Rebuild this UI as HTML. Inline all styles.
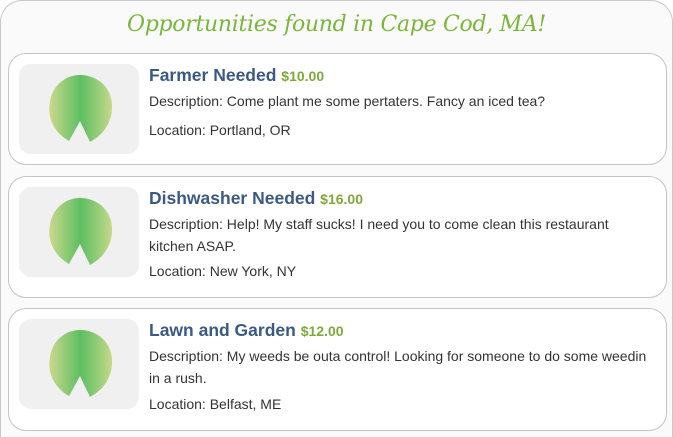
<!DOCTYPE html>
<html><head><meta charset="utf-8"><style>
*{margin:0;padding:0;box-sizing:border-box}
html,body{width:673px;height:437px;overflow:hidden}
body{background:#fff;font-family:"Liberation Sans",Arial,sans-serif;position:relative}
.outer{position:absolute;left:0;top:0;width:673px;height:437px;border:1px solid #c8c8c8;border-bottom:none;border-radius:22px 22px 0 0;background:#fafafa}
h1{position:absolute;left:0;width:673px;top:12px;text-align:center;font-family:"DejaVu Serif","Liberation Serif",serif;font-style:italic;font-weight:normal;font-size:22px;color:#7ab63a;letter-spacing:-0.3px}
.card{position:absolute;left:8px;width:659px;border:1px solid #c4c4c4;border-radius:18px;background:#fff}
.img{position:absolute;left:10px;top:10px;width:120px;height:90px;background:#f0f0f0;border-radius:12px}
.img svg{position:absolute;left:26px;top:10px}
.t{position:absolute;left:140px;top:11px;font-size:17.5px;font-weight:bold;color:#3a5a85}
.t span{font-size:14px;color:#7fa83a}
.d{position:absolute;left:140px;top:36px;width:500px;font-size:14px;line-height:22px;color:#333}
.l{position:absolute;left:140px;font-size:14px;color:#333}
</style></head><body>
<div class="outer"></div>
<h1>Opportunities found in Cape Cod, MA!</h1>
<svg width="0" height="0" style="position:absolute"><defs><linearGradient id="g" x1="0" x2="1" y1="0" y2="0"><stop offset="0" stop-color="#cbd88c"/><stop offset="0.5" stop-color="#5dbe62"/><stop offset="1" stop-color="#c6d98a"/></linearGradient></defs></svg>

<div class="card" style="top:53px;height:112px">
<div class="img"><svg width="70" height="70" viewBox="0 0 70 70"><path d="M35 1C20 1 7 12 5 28 2 42 8 58 24 67l11-20 10 21C60 60 68 46 67 30 66 13 52 1 35 1z" fill="url(#g)"/></svg></div>
<div class="t">Farmer Needed <span>$10.00</span></div>
<div class="d">Description: Come plant me some pertaters. Fancy an iced tea?</div>
<div class="l" style="top:68px">Location: Portland, OR</div>
</div>

<div class="card" style="top:176px;height:122px">
<div class="img"><svg width="70" height="70" viewBox="0 0 70 70"><path d="M35 1C20 1 7 12 5 28 2 42 8 58 24 67l11-20 10 21C60 60 68 46 67 30 66 13 52 1 35 1z" fill="url(#g)"/></svg></div>
<div class="t">Dishwasher Needed <span>$16.00</span></div>
<div class="d">Description: Help! My staff sucks! I need you to come clean this restaurant kitchen ASAP.</div>
<div class="l" style="top:86px">Location: New York, NY</div>
</div>

<div class="card" style="top:308px;height:123px">
<div class="img"><svg width="70" height="70" viewBox="0 0 70 70"><path d="M35 1C20 1 7 12 5 28 2 42 8 58 24 67l11-20 10 21C60 60 68 46 67 30 66 13 52 1 35 1z" fill="url(#g)"/></svg></div>
<div class="t">Lawn and Garden <span>$12.00</span></div>
<div class="d">Description: My weeds be outa control! Looking for someone to do some weedin in a rush.</div>
<div class="l" style="top:87px">Location: Belfast, ME</div>
</div>
</body></html>
